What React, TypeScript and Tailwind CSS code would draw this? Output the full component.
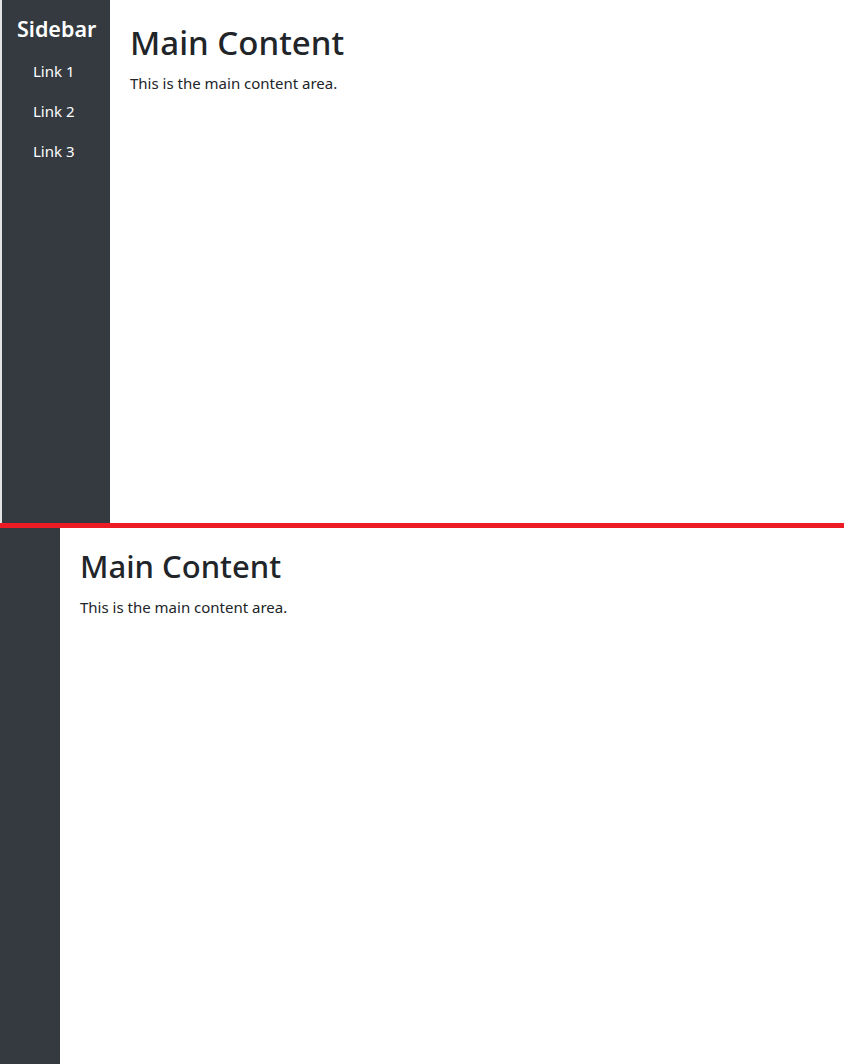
const FONT = "font-['Segoe_UI','Noto_Sans',sans-serif]";

const LINKS = ["Link 1", "Link 2", "Link 3"];

function MainContent({ compact }: { compact?: boolean }) {
  return (
    <main className="flex-1 bg-white p-5 text-[#212529]">
      <h1
        className={
          compact
            ? "mb-2.5 text-[31px] leading-[1.2] font-medium"
            : "mb-2 pt-0.5 text-[33px] leading-[1.25] font-medium"
        }
      >
        Main Content
      </h1>
      <p className="text-[15px] leading-6">This is the main content area.</p>
    </main>
  );
}

export default function App() {
  return (
    <div className={`${FONT} flex h-[1064px] flex-col bg-white`}>
      {/* expanded state */}
      <section className="flex h-[523px] border-l-2 border-[#e4e4e4]">
        <aside className="w-[108px] bg-[#343a40] p-[15px] text-white">
          <h4 className="mb-2 text-[21.5px] leading-[1.3] font-semibold">Sidebar</h4>
          <nav className="flex flex-col">
            {LINKS.map((l) => (
              <a key={l} href="#" className="px-4 py-2 text-[15px] leading-6 text-white">
                {l}
              </a>
            ))}
          </nav>
        </aside>
        <MainContent />
      </section>

      <div className="h-[5px] bg-[#ed1c24]" />

      {/* collapsed state */}
      <section className="flex flex-1">
        <aside className="w-[60px] bg-[#343a40]" />
        <MainContent compact />
      </section>
    </div>
  );
}
